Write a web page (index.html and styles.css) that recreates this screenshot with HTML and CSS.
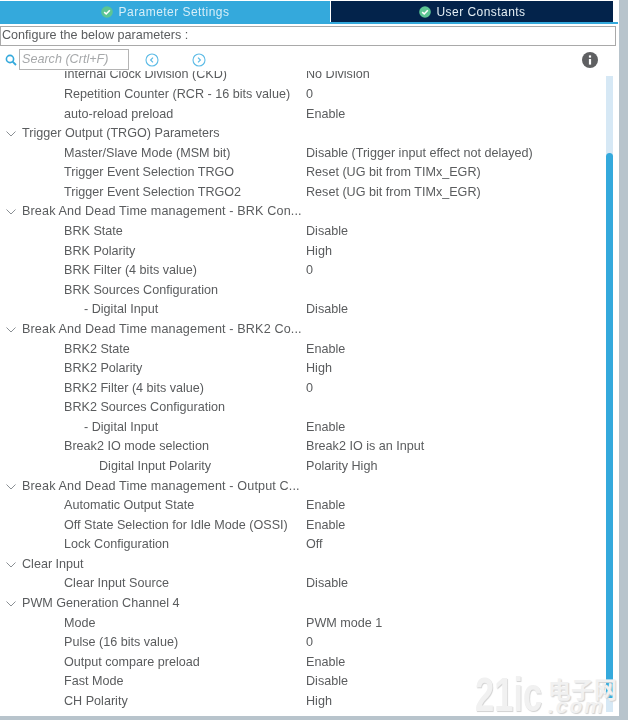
FILE: index.html
```html
<!DOCTYPE html>
<html lang="en">
<head>
<meta charset="utf-8">
<title>Parameter Settings</title>
<link rel="stylesheet" href="styles.css">
</head>
<body>
<div class="panel">
  <div class="tabs">
    <div class="tab tab-active"><svg class="check" viewBox="0 0 12 12"><circle cx="6" cy="6" r="5.8" fill="#5cc593"/><path d="M3.2 6.2 5.2 8 8.8 4.2" fill="none" stroke="#fff" stroke-width="1.6"/></svg>Parameter Settings</div>
    <div class="tab tab-dark"><svg class="check" viewBox="0 0 12 12"><circle cx="6" cy="6" r="5.8" fill="#5cc593"/><path d="M3.2 6.2 5.2 8 8.8 4.2" fill="none" stroke="#fff" stroke-width="1.6"/></svg>User Constants</div>
  </div>
  <div class="configure">Configure the below parameters :</div>
  <div class="toolbar">
    <svg class="search-icon" viewBox="0 0 12 12"><circle cx="5" cy="5" r="3.6" fill="none" stroke="#34a9dc" stroke-width="1.6"/><path d="M7.6 7.6 11 11" stroke="#34a9dc" stroke-width="1.8"/></svg>
    <div class="search">Search (Crtl+F)</div>
    <svg class="nav nav-prev" viewBox="0 0 14 14"><circle cx="7" cy="7" r="6" fill="none" stroke="#5cbbe6" stroke-width="1.1"/><path d="M8 4.6 5.6 7 8 9.4" fill="none" stroke="#5cbbe6" stroke-width="1.2"/></svg>
    <svg class="nav nav-next" viewBox="0 0 14 14"><circle cx="7" cy="7" r="6" fill="none" stroke="#5cbbe6" stroke-width="1.1"/><path d="M6 4.6 8.4 7 6 9.4" fill="none" stroke="#5cbbe6" stroke-width="1.2"/></svg>
    <svg class="info" viewBox="0 0 16 16"><circle cx="8" cy="8" r="8" fill="#5f6062"/><rect x="6.9" y="7" width="2.2" height="5.6" fill="#fff"/><rect x="6.9" y="3.4" width="2.2" height="2.2" fill="#fff"/></svg>
  </div>
  <div class="body">
    <div class="list">
      <div class="row row-cut"><span class="name">Internal Clock Division (CKD)</span><span class="val">No Division</span></div>
      <div class="row"><span class="name">Repetition Counter (RCR - 16 bits value)</span><span class="val">0</span></div>
      <div class="row"><span class="name">auto-reload preload</span><span class="val">Enable</span></div>
      <div class="row group"><svg class="chev" viewBox="0 0 10 6"><path d="M.5.5 5 5 9.5.5" fill="none" stroke="#8a8f94"/></svg>Trigger Output (TRGO) Parameters</div>
      <div class="row"><span class="name">Master/Slave Mode (MSM bit)</span><span class="val">Disable (Trigger input effect not delayed)</span></div>
      <div class="row"><span class="name">Trigger Event Selection TRGO</span><span class="val">Reset (UG bit from TIMx_EGR)</span></div>
      <div class="row"><span class="name">Trigger Event Selection TRGO2</span><span class="val">Reset (UG bit from TIMx_EGR)</span></div>
      <div class="row group wide"><svg class="chev" viewBox="0 0 10 6"><path d="M.5.5 5 5 9.5.5" fill="none" stroke="#8a8f94"/></svg>Break And Dead Time management - BRK Con...</div>
      <div class="row"><span class="name">BRK State</span><span class="val">Disable</span></div>
      <div class="row"><span class="name">BRK Polarity</span><span class="val">High</span></div>
      <div class="row"><span class="name">BRK Filter (4 bits value)</span><span class="val">0</span></div>
      <div class="row"><span class="name">BRK Sources Configuration</span></div>
      <div class="row"><span class="name sub">- Digital Input</span><span class="val">Disable</span></div>
      <div class="row group wide"><svg class="chev" viewBox="0 0 10 6"><path d="M.5.5 5 5 9.5.5" fill="none" stroke="#8a8f94"/></svg>Break And Dead Time management - BRK2 Co...</div>
      <div class="row"><span class="name">BRK2 State</span><span class="val">Enable</span></div>
      <div class="row"><span class="name">BRK2 Polarity</span><span class="val">High</span></div>
      <div class="row"><span class="name">BRK2 Filter (4 bits value)</span><span class="val">0</span></div>
      <div class="row"><span class="name">BRK2 Sources Configuration</span></div>
      <div class="row"><span class="name sub">- Digital Input</span><span class="val">Enable</span></div>
      <div class="row"><span class="name">Break2 IO mode selection</span><span class="val">Break2 IO is an Input</span></div>
      <div class="row"><span class="name sub2">Digital Input Polarity</span><span class="val">Polarity High</span></div>
      <div class="row group wide"><svg class="chev" viewBox="0 0 10 6"><path d="M.5.5 5 5 9.5.5" fill="none" stroke="#8a8f94"/></svg>Break And Dead Time management - Output C...</div>
      <div class="row"><span class="name">Automatic Output State</span><span class="val">Enable</span></div>
      <div class="row"><span class="name">Off State Selection for Idle Mode (OSSI)</span><span class="val">Enable</span></div>
      <div class="row"><span class="name">Lock Configuration</span><span class="val">Off</span></div>
      <div class="row group"><svg class="chev" viewBox="0 0 10 6"><path d="M.5.5 5 5 9.5.5" fill="none" stroke="#8a8f94"/></svg>Clear Input</div>
      <div class="row"><span class="name">Clear Input Source</span><span class="val">Disable</span></div>
      <div class="row group"><svg class="chev" viewBox="0 0 10 6"><path d="M.5.5 5 5 9.5.5" fill="none" stroke="#8a8f94"/></svg>PWM Generation Channel 4</div>
      <div class="row"><span class="name">Mode</span><span class="val">PWM mode 1</span></div>
      <div class="row"><span class="name">Pulse (16 bits value)</span><span class="val">0</span></div>
      <div class="row"><span class="name">Output compare preload</span><span class="val">Enable</span></div>
      <div class="row"><span class="name">Fast Mode</span><span class="val">Disable</span></div>
      <div class="row"><span class="name">CH Polarity</span><span class="val">High</span></div>
    </div>
    <div class="scrollbar"><div class="thumb"></div></div>
  </div>
</div>
<div class="watermark"><span class="wm-num">21ic</span><span class="wm-side"><span class="wm-cn">电子网</span><span class="wm-com">.com</span></span></div>
</body>
</html>
```
FILE: styles.css
```css
* { box-sizing: border-box; }
html, body { margin: 0; padding: 0; }
body {
  width: 628px;
  height: 720px;
  overflow: hidden;
  background: #b8c4cc;
  font-family: "Liberation Sans", Arial, sans-serif;
  font-size: 12.6px;
  color: #5a5c5e;
  position: relative;
}
.panel {
  width: 619px;
  height: 716px;
  background: #fff;
  display: flex;
  flex-direction: column;
  overflow: hidden;
  filter: blur(.3px);
}
.tabs {
  display: flex;
  height: 23px;
  margin-top: 1px;
  width: 618px;
  border-bottom: 2px solid #34a9dc;
  flex: none;
}
.tab {
  display: flex;
  align-items: center;
  justify-content: center;
  gap: 6px;
  color: #e4eef4;
  letter-spacing: .45px;
  font-size: 12px;
}
.tab-active { width: 330px; background: #34a9dc; color: #d6eef8; }
.tab-dark { width: 282px; margin-left: 1px; background: #03234b; }
.check { width: 12px; height: 12px; flex: none; }
.configure {
  margin-top: 2px;
  width: 616px;
  height: 20px;
  flex: none;
  border: 1px solid #a9a9a9;
  line-height: 17px;
  padding-left: 1px;
}
.toolbar {
  flex: none;
  height: 25px;
  display: flex;
  align-items: center;
  padding: 2px 0 0 5px;
}
.search-icon { width: 12px; height: 12px; flex: none; }
.search {
  width: 110px;
  height: 21px;
  margin-left: 2px;
  border: 1px solid #b4b4b4;
  color: #a6a8aa;
  font-style: italic;
  font-size: 12.6px;
  line-height: 19px;
  padding-left: 2px;
}
.nav { width: 14px; height: 14px; flex: none; }
.nav-prev { margin-left: 16px; }
.nav-next { margin-left: 33px; }
.info { width: 16px; height: 16px; flex: none; margin-left: 376px; }
.body {
  flex: 1;
  min-height: 0;
  display: flex;
  overflow: hidden;
}
.list {
  width: 606px;
  flex: none;
  overflow: hidden;
}
.row {
  height: 19.58px;
  line-height: 19.58px;
  display: flex;
  white-space: nowrap;
}
.row-cut { margin-top: -5.6px; }
.name {
  width: 306px;
  flex: none;
  padding-left: 64px;
}
.name.sub { padding-left: 84px; }
.name.sub2 { padding-left: 99px; }
.group { padding-left: 6px; }
.group.wide { letter-spacing: .14px; }
.chev { width: 10px; height: 6px; margin: 7px 6px 0 0; flex: none; }
.scrollbar {
  width: 7px;
  flex: none;
  margin: 5px 0 4px;
  background: #d6e8f5;
}
.thumb {
  margin-top: 77px;
  height: 545px;
  background: #34a9dc;
  border-radius: 4px 4px 0 0;
}
.watermark {
  position: absolute;
  left: 475px;
  top: 676px;
  width: 144px;
  display: flex;
  justify-content: space-between;
  color: #f1f1f1;
  text-shadow: 1px 1px 1px #d2d2d2;
  font-weight: bold;
}
.wm-num {
  display: block;
  width: 68px;
  font-size: 48px;
  line-height: 37px;
  transform: scaleX(.72);
  transform-origin: left top;
}
.wm-side { display: flex; flex-direction: column; width: 71px; }
.wm-cn { font-family: "Noto Sans CJK SC", sans-serif; font-size: 23px; line-height: 24px; }
.wm-com { font-size: 21px; line-height: 12px; font-style: italic; letter-spacing: 2px; }
```
